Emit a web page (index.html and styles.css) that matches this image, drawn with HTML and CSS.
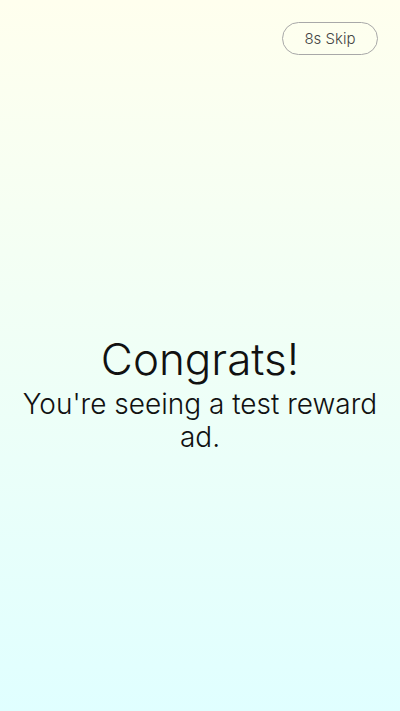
FILE: index.html
```html
<!DOCTYPE html>
<html>
<head>
<meta charset="utf-8">
<link rel="stylesheet" href="styles.css">
</head>
<body>
<div class="screen">
  <div class="top">
    <button class="skip">8s Skip</button>
  </div>
  <div class="content">
    <h1 class="title">Congrats!</h1>
    <p class="sub">You're seeing a test reward ad.</p>
  </div>
</div>
</body>
</html>
```
FILE: styles.css
```css
html, body {
  margin: 0;
  padding: 0;
}
body {
  width: 400px;
  height: 711px;
  background: linear-gradient(to bottom, #ffffee 0%, #e0ffff 100%);
  font-family: Inter, "Noto Sans", sans-serif;
  color: #111;
}
.screen {
  height: 711px;
  display: flex;
  flex-direction: column;
}
.top {
  display: flex;
  justify-content: flex-end;
  padding: 22px 22px 0 0;
}
.skip {
  width: 96px;
  height: 33px;
  border: 1px solid #a8a8a8;
  border-radius: 17px;
  background: transparent;
  font-family: Inter, sans-serif;
  font-size: 15px;
  font-weight: 300;
  color: #444;
  padding: 0;
}
.content {
  padding: 0 16px;
  margin-top: 277px;
  text-align: center;
}
.title {
  margin: 0;
  font-size: 44px;
  font-weight: 300;
  line-height: 54px;
}
.sub {
  margin: 2px 0 0;
  font-size: 28px;
  font-weight: 300;
  line-height: 33px;
}
```
